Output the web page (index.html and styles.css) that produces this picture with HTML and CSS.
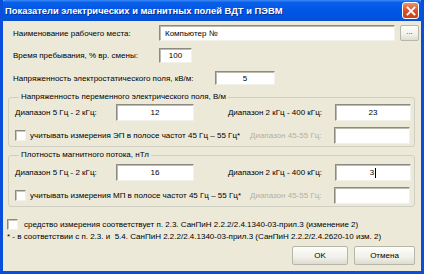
FILE: index.html
```html
<!DOCTYPE html>
<html lang="ru">
<head>
    <meta charset="UTF-8">
    <title>Показатели электрических и магнитных полей ВДТ и ПЭВМ</title>
    <link rel="stylesheet" href="styles.css">
</head>
<body>

    <div class="window">
        <!-- Title bar -->
        <div class="titlebar">
            <span class="title">Показатели электрических и магнитных полей ВДТ и ПЭВМ</span>
            <span class="close">
                <svg width="10" height="10" viewBox="0 0 10 10">
                    <path d="M1.5 1.5 L8.5 8.5 M8.5 1.5 L1.5 8.5" stroke="#fff" stroke-width="1.8" stroke-linecap="square"/>
                </svg>
            </span>
        </div>

        <div class="content">
            <div class="row row-place">
                <span class="lbl lbl-wide">Наименование рабочего места:</span>
                <span class="field field-place">Компьютер №</span>
                <span class="btn btn-dots">...</span>
            </div>

            <div class="row row-time">
                <span class="lbl lbl-wide">Время пребывания, % вр. смены:</span>
                <span class="field field-time center">100</span>
            </div>

            <div class="row row-static">
                <span class="lbl lbl-static">Напряженность электростатического поля, кВ/м:</span>
                <span class="field field-static center">5</span>
            </div>

            <!-- Electric field group -->
            <fieldset class="group group-e">
                <legend>Напряженность переменного электрического поля, В/м</legend>
                <div class="grow">
                    <span class="lbl lbl-range">Диапазон 5 Гц - 2 кГц:</span>
                    <span class="field field-range center">12</span>
                    <span class="lbl lbl-range2">Диапазон 2 кГц - 400 кГц:</span>
                    <span class="field field-range2 center">23</span>
                </div>
                <div class="grow grow-check">
                    <span class="check"></span>
                    <span class="lbl lbl-check">учитывать измерения ЭП в полосе частот 45 Гц – 55 Гц*</span>
                    <span class="lbl lbl-off">Диапазон 45-55 Гц:</span>
                    <span class="field field-range2"></span>
                </div>
            </fieldset>

            <!-- Magnetic field group -->
            <fieldset class="group group-m">
                <legend>Плотность магнитного потока, нТл</legend>
                <div class="grow">
                    <span class="lbl lbl-range">Диапазон 5 Гц - 2 кГц:</span>
                    <span class="field field-range center">16</span>
                    <span class="lbl lbl-range2">Диапазон 2 кГц - 400 кГц:</span>
                    <span class="field field-range2 center">3<span class="caret"></span></span>
                </div>
                <div class="grow grow-check">
                    <span class="check"></span>
                    <span class="lbl lbl-check">учитывать измерения МП в полосе частот 45 Гц – 55 Гц*</span>
                    <span class="lbl lbl-off">Диапазон 45-55 Гц:</span>
                    <span class="field field-range2"></span>
                </div>
            </fieldset>

            <div class="row row-device">
                <span class="check"></span>
                <span class="lbl">средство измерения соответствует п. 2.3. СанПиН 2.2.2/2.4.1340-03-прил.3 (изменение 2)</span>
            </div>

            <div class="note">* - в соответствии с п. 2.3. и  5.4. СанПиН 2.2.2/2.4.1340-03-прил.3 (СанПиН 2.2.2/2.4.2620-10 изм. 2)</div>

            <div class="buttons">
                <span class="btn btn-ok">OK</span>
                <span class="btn btn-cancel">Отмена</span>
            </div>
        </div>
    </div>

</body>
</html>
```

FILE: styles.css
```css
body {
    margin: 0;
    font-family: "Liberation Sans", Arial, sans-serif;
    font-size: 8px;
    color: #000;
    background: #fff;
}
.window {
    width: 424px;
    height: 274px;
    box-sizing: border-box;
    background: #ece9d8;
    border: 3px solid #0a4fdc;
    border-top: none;
    overflow: hidden;
}
.titlebar {
    height: 21px;
    margin: 0 -3px;
    display: flex;
    align-items: center;
    justify-content: space-between;
    padding: 0 5px 0 5px;
    background: linear-gradient(#3a8cf7 0%, #0a5ee8 12%, #0058e6 45%, #0053e0 80%, #0a4fcf 100%);
    border-radius: 5px 5px 0 0;
}
.title {
    color: #fff;
    font-weight: bold;
    font-size: 9.4px;
    text-shadow: 1px 1px 0 #0a2c8c;
}
.close {
    width: 15px;
    height: 15px;
    display: flex;
    align-items: center;
    justify-content: center;
    background: linear-gradient(#e89273, #d8532a 50%, #c9401c);
    border: 1px solid #fff;
    border-radius: 3px;
}
.content {
    padding-top: 4px;
}
.row {
    display: flex;
    align-items: center;
    padding-left: 10px;
}
.lbl {
    white-space: nowrap;
}
.field {
    box-sizing: border-box;
    display: flex;
    align-items: center;
    padding: 0 5px;
    background: #fff;
    border: 1px solid;
    border-color: #8d8b80 #f2f1ea #f2f1ea #8d8b80;
    box-shadow: inset 1px 1px 0 #bdbab0;
}
.center {
    justify-content: center;
}
.row-place {
    height: 16px;
}
.lbl-wide {
    width: 146px;
}
.field-place {
    width: 236px;
    height: 16px;
}
.btn {
    box-sizing: border-box;
    display: flex;
    align-items: center;
    justify-content: center;
    background: linear-gradient(#fdfdfb, #f1f0ea 60%, #dedcd0);
    border: 1px solid #b8b6a8;
    border-radius: 2px;
}
.btn-dots {
    width: 19px;
    height: 16px;
    margin-left: 5px;
    color: #333;
    padding-bottom: 3px;
}
.row-time {
    height: 15px;
    margin-top: 7px;
}
.field-time {
    width: 33px;
    height: 15px;
}
.row-static {
    height: 14px;
    margin-top: 8px;
}
.lbl-static {
    width: 202px;
}
.field-static {
    width: 60px;
    height: 14px;
}
.group {
    margin: 7px 6px 0 5px;
    padding: 0 0 2px 6px;
    border: 1px solid #d0cfc3;
    border-radius: 3px;
}
.group legend {
    padding: 0 2px;
    margin-left: 4px;
    line-height: 10px;
}
.group-m {
    margin-top: 3px;
}
.grow {
    display: flex;
    align-items: center;
    height: 17px;
    margin-top: 2px;
}
.grow-check {
    margin-top: 6px;
}
.group-m .grow {
    margin-top: 4px;
}
.group-m .grow-check {
    margin-top: 6px;
}
.lbl-range {
    width: 101px;
}
.field-range {
    width: 78px;
    height: 17px;
}
.lbl-range2 {
    width: 128px;
    text-align: right;
    margin-right: 13px;
}
.field-range2 {
    width: 76px;
    height: 17px;
}
.check {
    box-sizing: border-box;
    width: 11px;
    height: 11px;
    background: #fff;
    border: 1px solid;
    border-color: #8d8b80 #f2f1ea #f2f1ea #8d8b80;
    box-shadow: inset 1px 1px 0 #c9c6bb;
    flex: none;
}
.lbl-check {
    margin-left: 4px;
    width: 220px;
}
.lbl-off {
    width: 84px;
    color: #b3b0a4;
}
.caret {
    display: inline-block;
    width: 1px;
    height: 10px;
    margin-left: 1px;
    background: #000;
}
.row-device {
    padding-left: 4px;
    margin-top: 12px;
    height: 11px;
}
.row-device .lbl {
    margin-left: 6px;
}
.note {
    padding-left: 4px;
    margin-top: 2px;
    white-space: pre;
}
.buttons {
    display: flex;
    justify-content: flex-end;
    padding-right: 6px;
    margin-top: 5px;
}
.btn-ok {
    width: 56px;
    height: 19px;
}
.btn-cancel {
    width: 61px;
    height: 19px;
    margin-left: 6px;
}
```
